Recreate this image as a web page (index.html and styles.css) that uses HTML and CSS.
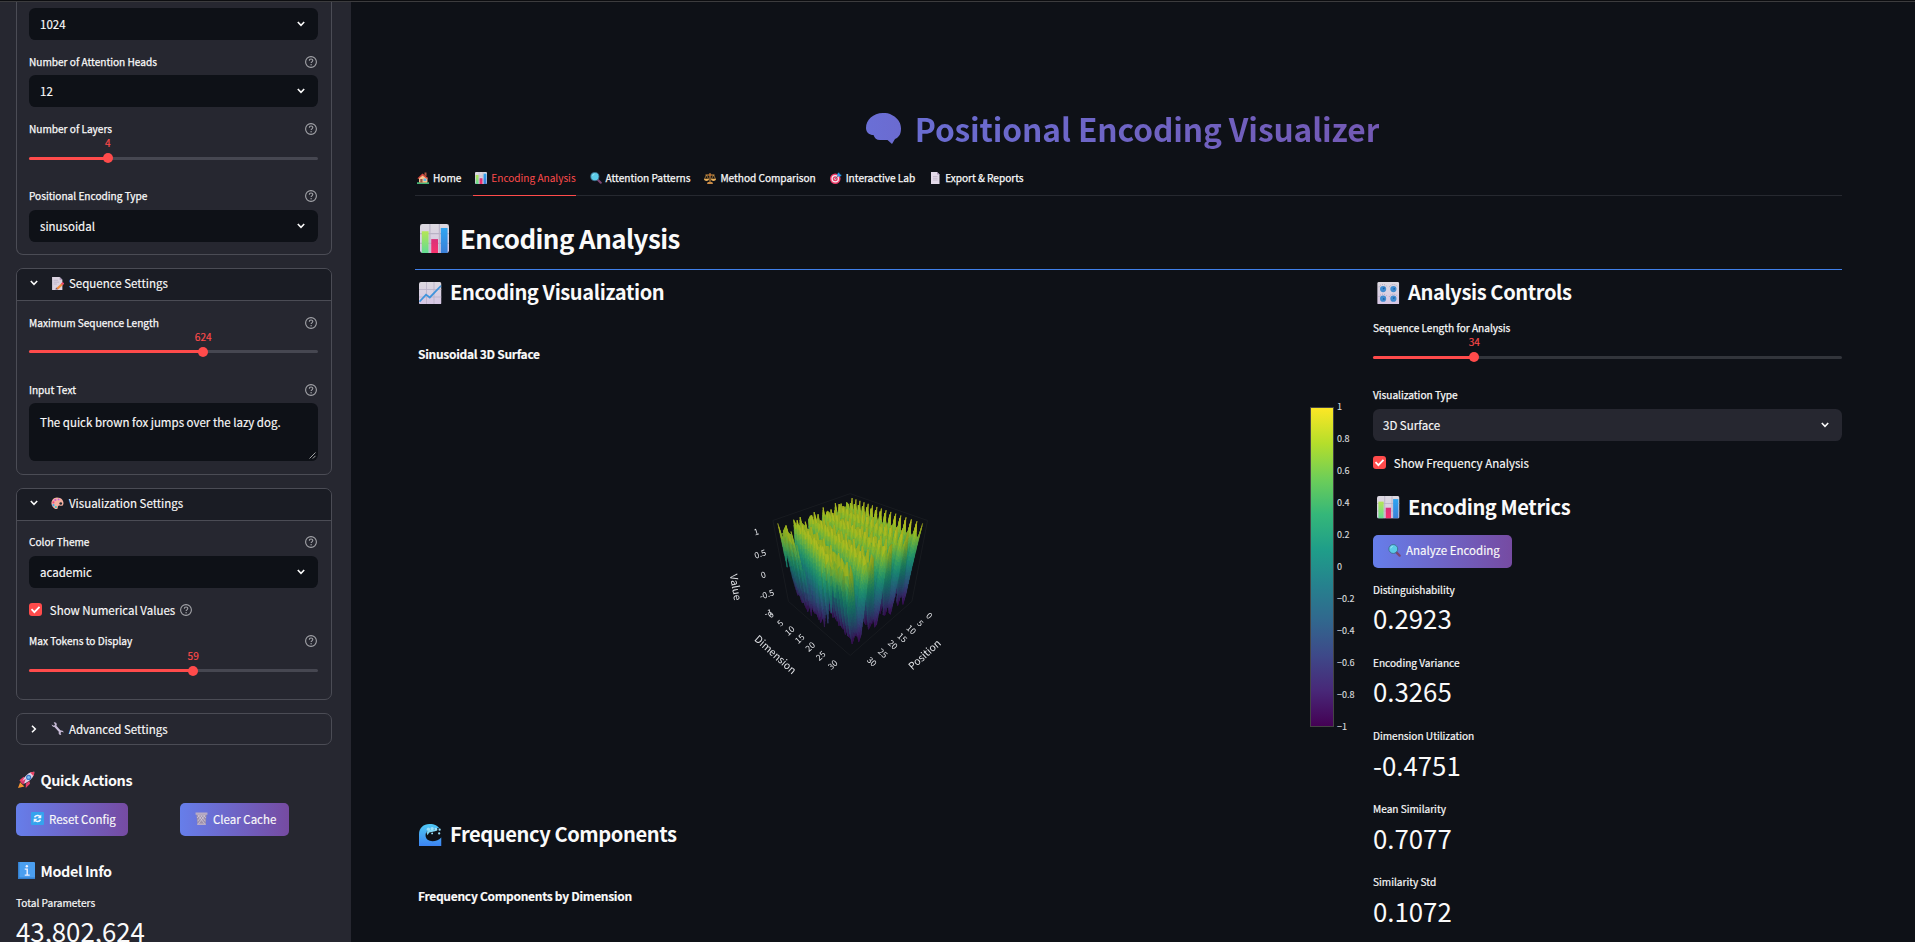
FILE: index.html
```html
<!DOCTYPE html>
<html lang="en">
<head>
<meta charset="utf-8">
<title>Positional Encoding Visualizer</title>
<link rel="stylesheet" href="styles.css">
</head>
<body>
<svg class="defs" aria-hidden="true">
  <defs>
    <linearGradient id="paper" x1="0" y1="0" x2="0" y2="1"><stop offset="0" stop-color="#dcd9e0"/><stop offset="1" stop-color="#d6c6e4"/></linearGradient>
    <linearGradient id="green" x1="0" y1="0" x2="0" y2="1"><stop offset="0" stop-color="#b5e655"/><stop offset="1" stop-color="#62dc94"/></linearGradient>
    <linearGradient id="pink" x1="0" y1="0" x2="0" y2="1"><stop offset="0" stop-color="#d9307a"/><stop offset="1" stop-color="#f8326c"/></linearGradient>
    <linearGradient id="blue" x1="0" y1="0" x2="0" y2="1"><stop offset="0" stop-color="#2ea5f2"/><stop offset="1" stop-color="#3b7fd6"/></linearGradient>
    <linearGradient id="sea" x1="0" y1="0" x2="0" y2="1"><stop offset="0" stop-color="#4fc9f5"/><stop offset="1" stop-color="#3c82f2"/></linearGradient>
    <linearGradient id="violet" x1="0" y1="0" x2="1" y2="0"><stop offset="0" stop-color="#6a6fd6"/><stop offset="1" stop-color="#6b6bd0"/></linearGradient>
  </defs>
  <symbol id="bars" viewBox="0 0 24 24"><rect width="24" height="24" rx="2" fill="url(#paper)"/><path d="M8.2 0v24M16 0v24M0 8h24M0 16h24" stroke="#b9b2c6" stroke-width=".9"/><rect x="1.5" y="6" width="5.6" height="18" fill="url(#green)"/><rect x="9.3" y="12.5" width="5.6" height="11.5" fill="url(#pink)"/><rect x="17.2" y="3.3" width="5.6" height="20.7" fill="url(#blue)"/></symbol>
  <symbol id="trend" viewBox="0 0 24 24"><rect width="24" height="24" rx="2" fill="url(#paper)"/><path d="M8 0v24M16 0v24M0 8h24M0 16h24" stroke="#bab3c8" stroke-width=".9"/><path d="M.5 21 7.5 13.5 11.5 16.5 23.5 4" fill="none" stroke="#3f94dc" stroke-width="1.9"/></symbol>
  <symbol id="knobs" viewBox="0 0 24 24"><rect x=".4" width="23.2" height="24" rx="1.5" fill="url(#paper)"/><g stroke="#a79bb2" stroke-width="1" stroke-dasharray="1 1.2" fill="none"><path d="M2 5.500a5 5 0 0 1 9 0M13 5.500a5 5 0 0 1 9 0M2 15.800a5 5 0 0 1 9 0M13 15.800a5 5 0 0 1 9 0"/></g><g fill="#3f8bd0"><circle cx="6.500" cy="7.500" r="3.300"/><circle cx="17.500" cy="7.500" r="3.300"/><circle cx="6.500" cy="17.800" r="3.300"/><circle cx="17.500" cy="17.800" r="3.300"/></g><path d="M6.500 7.500 8 6M17.500 7.500l1.600-.5M6.500 17.800l1.500.8M17.500 17.800l1-1.400" stroke="#1a5a97" stroke-width="1.400"/></symbol>
  <symbol id="search" viewBox="0 0 24 24"><path d="m14.500 14.500 7 7" stroke="#7c4672" stroke-width="4.200" stroke-linecap="round"/><circle cx="9.700" cy="9.200" r="8.200" fill="#5ccbe8" stroke="#3c6d8b" stroke-width="1.600"/><path d="M5 8a5 5 0 0 1 4-4" stroke="#a5ebf7" stroke-width="1.500" fill="none"/></symbol>
  <symbol id="house" viewBox="0 0 24 24"><path d="M4 11h17v10H4z" fill="#f0b98a"/><path d="M0 20.500h24V24H0z" fill="#45b576"/><path d="M5 12 12 5l8 7v9H5z" fill="#f9c58d"/><path d="M1 12.500 11 3l11 9.500-2 1.500-9-7-8.500 7z" fill="#d9483f"/><path d="M15 1h4v8l-4-3z" fill="#b1543e"/><rect x="6.500" y="14" width="4.500" height="7" fill="#985446"/><rect x="13" y="13" width="5.500" height="5" fill="#5bb7ee"/></symbol>
  <symbol id="scales" viewBox="0 0 24 24"><g stroke="#d89a45" fill="none" stroke-width="2"><path d="M12 2v19M3 6h18M7 22h10"/><path d="M5 6 1 14h8L5 6M19 6l-4 8h8l-4-8" stroke-width="1.300"/></g><path d="M0 14h10c0 5-10 5-10 0m14 0h10c0 5-10 5-10 0" fill="#edb35b"/><circle cx="12" cy="6" r="2.500" fill="#b56a32"/><path d="M8 20h8l2 4H6z" fill="#c98a45"/></symbol>
  <symbol id="target" viewBox="0 0 24 24"><circle cx="10.500" cy="13.500" r="10.500" fill="#ed3b67"/><circle cx="10.500" cy="13.500" r="7.600" fill="#f2e8f2"/><circle cx="10.500" cy="13.500" r="5" fill="#e33b63"/><circle cx="10.500" cy="13.500" r="2" fill="#f2e8f2"/><path d="m10 14 7-7" stroke="#596478" stroke-width="1.600"/><path d="m15 8-.5-4L18 .500l1.500 3.800L23.500 6 20 9.500z" fill="#289cec"/></symbol>
  <symbol id="page" viewBox="0 0 24 24"><path d="M4 0h12l5 5v19H4z" fill="#e2d9e8"/><path d="m16 0 5 5h-5z" fill="#a996b7"/><path d="M8 9h9M8 12.500h9M8 16h9" stroke="#b7aabf" stroke-width="1.300"/></symbol>
  <symbol id="memo" viewBox="0 0 24 24"><path d="M2 0h14l5 5v19H2z" fill="#dcd3e1"/><path d="m16 0 5 5h-5z" fill="#a996b7"/><path d="M5 6h8M5 9.500h10M5 13h6" stroke="#b5a9bf" stroke-width="1.200"/><path d="m9 21 11-10 3 3-10 9z" fill="#f28b3d"/><path d="m18.500 12 3-3 3 3-3 3z" fill="#e8476f"/><path d="m8 23 1.500-3.500L13 23z" fill="#7b5367"/></symbol>
  <symbol id="palette" viewBox="0 0 24 24"><path d="M11 1C2 1-2 12 3 18c3 4 6 5 8 4 3-1 0-4 3-6 3-1 5 2 8-1 3-4 0-14-11-14" fill="#f5b1a1"/><circle cx="18" cy="12" r="2.500" fill="#202630"/><g><circle cx="8" cy="5.500" r="2" fill="#d558d7"/><circle cx="14" cy="4.500" r="1.600" fill="#c95ad8"/><circle cx="4.500" cy="10" r="2" fill="#ed497b"/><circle cx="4.500" cy="15" r="2" fill="#3fa9ef"/><circle cx="9" cy="18.500" r="2" fill="#3ec6be"/></g></symbol>
  <symbol id="wrench" viewBox="0 0 24 24"><path d="m7 7 11 12" stroke="#cdc1dc" stroke-width="4"/><path d="M1 4.500 5.500 7 7.500 5 5 .800c4-1 7 2.500 5 6-1.500 3.500-7 4-9-2.300M23.500 19.500 19.500 18l-2 2 1.500 3.800c-3.500.500-6-2.500-4.500-5.500 2-3.500 8-3.300 9 1.200" fill="#c3b7d2"/></symbol>
  <symbol id="rocket" viewBox="0 0 24 24"><path d="m0 24 3-8 6 6z" fill="#f79430"/><path d="m2 13 6-5 4 4-6 6zM11 18l5-4 1 4-6 6z" fill="#ee416c"/><path d="M6 16c2-8 9-15 17-15 0 8-7 14-15 17z" fill="#ded3e7"/><path d="M17 2c2-.800 4-1 6-1 0 2-.300 4-1.200 6z" fill="#e94264"/><circle cx="15" cy="9" r="3.600" fill="#3f77c8"/><circle cx="15" cy="9" r="2" fill="#75c1f1"/><path d="m4 16 7-5-3 8z" fill="#d93568"/></symbol>
  <symbol id="refresh" viewBox="0 0 24 24"><rect width="24" height="24" rx="2" fill="#35a3ed"/><g fill="none" stroke="#f4f5ff" stroke-width="2.800"><path d="M6.500 10c2-4.500 8-4.500 10-1.500M17.500 14c-2 4.500-8 4.500-10 1.500"/></g><path d="M19 4.500v7h-7zM5 19.500v-7h7z" fill="#f4f5ff"/></symbol>
  <symbol id="trash" viewBox="0 0 24 24"><path d="M2.500 3h19l-2 20h-15z" fill="#9c90aa"/><path d="m5 5 13 17M10 5l9 12M15 5l5 6M19 5 6 22M14 5 5 17M9 5l-5 6" stroke="#d8cedf" stroke-width="1.300"/><path d="M1 1h22v4H1zM4 21h16v3H4z" fill="#b9acc4"/></symbol>
  <symbol id="info" viewBox="0 0 24 24"><rect width="24" height="24" rx="1.500" fill="#4b9ff0"/><path d="M0 0h2v24H0zM0 22h24v2H0z" fill="#347fce"/><path d="M9.500 10h3.500v8M9.500 18.500h7" fill="none" stroke="#eff1ff" stroke-width="2"/><circle cx="12.500" cy="6" r="1.700" fill="#eff1ff"/></symbol>
  <symbol id="wave" viewBox="0 0 24 24"><path d="M0 24V11C0 4 5 0 11 0c6 0 9 2 11 5-3-1-5 0-6 1-4-1-9 1-9 6 0 8 12 8 17 2v10z" fill="url(#sea)"/><path d="M8 9c3-5 7-3 9-3l3 1-4 1-5 1-2 3z" fill="#7fd6f5"/><g fill="#9be0f8"><circle cx="10" cy="5.500" r="1.800"/><circle cx="14" cy="5" r="1.800"/><circle cx="18" cy="5.500" r="1.500"/><circle cx="22" cy="6" r="1.200"/><circle cx="21.500" cy="10" r="1.200"/><circle cx="14" cy="10" r="1"/></g></symbol>
  <symbol id="brain" viewBox="0 0 35 31"><path d="M17 0c4-.300 8 1 11.500 3.500 4 3 6.500 7 6.500 12 0 5-1.500 8.500-6 10.500L26 31l-4.500-4H14c-3.500 0-5.500-2-6.500-5C3.500 22 0 19.500 0 15 0 7 7 0 17 0" fill="url(#violet)"/></symbol>
  <symbol id="down" viewBox="0 0 8 6"><path d="M.8 1 4 4.300 7.200 1" fill="none" stroke="#fafafa" stroke-width="1.600"/></symbol>
  <symbol id="right" viewBox="0 0 6 8"><path d="M1 .8 4.300 4 1 7.200" fill="none" stroke="#fafafa" stroke-width="1.600"/></symbol>
  <symbol id="help" viewBox="0 0 12 12"><circle cx="6" cy="6" r="5.400" fill="none" stroke="#a3a4a9" stroke-width="1.100"/><path d="M4.300 4.800c0-2.400 3.500-2.300 3.500-.2 0 1.200-1.700 1.300-1.700 2.500" fill="none" stroke="#a3a4a9" stroke-width="1.100"/><circle cx="6.100" cy="8.800" r=".7" fill="#a3a4a9"/></symbol>
  <symbol id="check" viewBox="0 0 13 13"><rect width="13" height="13" rx="3" fill="#ff4b4b"/><path d="m2.500 6.200 2.900 2.900 5.100-5.200" fill="none" stroke="#fff" stroke-width="1.800"/></symbol>
</svg>

<div class="topline"></div>
<div class="app">
  <aside class="sidebar">
    <section class="expander cut">
      <div class="body">
        <div class="select"><span>1024</span><svg class="chev"><use href="#down"/></svg></div>
        <div><div class="label"><span>Number of Attention Heads</span><svg class="help"><use href="#help"/></svg></div>
          <div class="select"><span>12</span><svg class="chev"><use href="#down"/></svg></div></div>
        <div><div class="label"><span>Number of Layers</span><svg class="help"><use href="#help"/></svg></div>
          <div class="slider"><div class="fill" style="width:27.300%"><b>4</b></div></div></div>
        <div><div class="label"><span>Positional Encoding Type</span><svg class="help"><use href="#help"/></svg></div>
          <div class="select"><span>sinusoidal</span><svg class="chev"><use href="#down"/></svg></div></div>
      </div>
    </section>
    <section class="expander">
      <div class="head"><svg class="chev"><use href="#down"/></svg><svg class="emo"><use href="#memo"/></svg><span>Sequence Settings</span></div>
      <div class="body">
        <div><div class="label"><span>Maximum Sequence Length</span><svg class="help"><use href="#help"/></svg></div>
          <div class="slider"><div class="fill" style="width:60.300%"><b>624</b></div></div></div>
        <div><div class="label"><span>Input Text</span><svg class="help"><use href="#help"/></svg></div>
          <div class="textarea"><span>The quick brown fox jumps over the lazy dog.</span><svg class="grip" viewBox="0 0 7 7"><path d="M.5 6.500l6-6M3.800 6.500l2.700-2.700" stroke="#c5c6c8" stroke-width=".8"/></svg></div></div>
      </div>
    </section>
    <section class="expander">
      <div class="head"><svg class="chev"><use href="#down"/></svg><svg class="emo"><use href="#palette"/></svg><span>Visualization Settings</span></div>
      <div class="body">
        <div><div class="label"><span>Color Theme</span><svg class="help"><use href="#help"/></svg></div>
          <div class="select"><span>academic</span><svg class="chev"><use href="#down"/></svg></div></div>
        <div class="checkrow"><svg class="check"><use href="#check"/></svg><span>Show Numerical Values</span><svg class="help"><use href="#help"/></svg></div>
        <div><div class="label"><span>Max Tokens to Display</span><svg class="help"><use href="#help"/></svg></div>
          <div class="slider"><div class="fill" style="width:56.800%"><b>59</b></div></div></div>
      </div>
    </section>
    <section class="expander closed">
      <div class="head"><svg class="chev side"><use href="#right"/></svg><svg class="emo"><use href="#wrench"/></svg><span>Advanced Settings</span></div>
    </section>
    <h4 class="side-title"><svg><use href="#rocket"/></svg>Quick Actions</h4>
    <div class="actions">
      <div class="button reset"><svg class="emo"><use href="#refresh"/></svg><span>Reset Config</span></div>
      <div class="button clear"><svg class="emo"><use href="#trash"/></svg><span>Clear Cache</span></div>
    </div>
    <h4 class="side-title info"><svg><use href="#info"/></svg>Model Info</h4>
    <div class="metric total"><div class="name">Total Parameters</div><div class="num">43,802,624</div></div>
  </aside>

  <main class="main">
    <h1 class="title"><svg><use href="#brain"/></svg><span>Positional Encoding Visualizer</span></h1>
    <nav class="tabs">
      <div class="tab"><svg><use href="#house"/></svg><span>Home</span></div>
      <div class="tab active"><svg><use href="#bars"/></svg><span>Encoding Analysis</span></div>
      <div class="tab"><svg><use href="#search"/></svg><span>Attention Patterns</span></div>
      <div class="tab"><svg><use href="#scales"/></svg><span>Method Comparison</span></div>
      <div class="tab"><svg><use href="#target"/></svg><span>Interactive Lab</span></div>
      <div class="tab"><svg><use href="#page"/></svg><span>Export &amp; Reports</span></div>
    </nav>
    <h2 class="section"><svg><use href="#bars"/></svg><span>Encoding Analysis</span></h2>
    <div class="columns">
      <div class="left">
        <h3 class="sub"><svg><use href="#trend"/></svg><span>Encoding Visualization</span></h3>
        <div class="plot">
          <div class="plot-title">Sinusoidal 3D Surface</div>
          <canvas id="surface" class="surface" width="280" height="230"></canvas>
          <svg class="axes" viewBox="0 0 280 230">
            <g class="tick" id="ticks"></g>
            <g class="axis">
              <text transform="translate(76,184) rotate(42)">Dimension</text>
              <text transform="translate(224,184) rotate(-42)">Position</text>
              <text transform="translate(36.500,117) rotate(80)">Value</text>
            </g>
          </svg>
          <div class="colorbar"><div class="ramp"></div>
            <div class="scale"><i>1</i><i>0.8</i><i>0.6</i><i>0.4</i><i>0.2</i><i>0</i><i>−0.2</i><i>−0.4</i><i>−0.6</i><i>−0.8</i><i>−1</i></div></div>
        </div>
        <h3 class="sub"><svg><use href="#wave"/></svg><span>Frequency Components</span></h3>
        <div class="plot-title second">Frequency Components by Dimension</div>
      </div>
      <div class="right">
        <h3 class="sub"><svg><use href="#knobs"/></svg><span>Analysis Controls</span></h3>
        <div class="controls">
          <div><div class="label"><span>Sequence Length for Analysis</span></div>
            <div class="slider"><div class="fill" style="width:21.600%"><b>34</b></div></div></div>
          <div><div class="label"><span>Visualization Type</span></div>
            <div class="select light"><span>3D Surface</span><svg class="chev"><use href="#down"/></svg></div></div>
          <div class="checkrow"><svg class="check"><use href="#check"/></svg><span>Show Frequency Analysis</span></div>
        </div>
        <h3 class="sub met"><svg><use href="#bars"/></svg><span>Encoding Metrics</span></h3>
        <div class="button analyze"><svg class="emo"><use href="#search"/></svg><span>Analyze Encoding</span></div>
        <div class="metric"><div class="name">Distinguishability</div><div class="num">0.2923</div></div>
        <div class="metric"><div class="name">Encoding Variance</div><div class="num">0.3265</div></div>
        <div class="metric"><div class="name">Dimension Utilization</div><div class="num">-0.4751</div></div>
        <div class="metric"><div class="name">Mean Similarity</div><div class="num">0.7077</div></div>
        <div class="metric"><div class="name">Similarity Std</div><div class="num">0.1072</div></div>
      </div>
    </div>
  </main>
</div>
<script src="surface.js"></script>
</body>
</html>
```
FILE: styles.css
```css
* { box-sizing: border-box; }
body { margin: 0; height: 942px; overflow: hidden; background: #0e1117; color: #fafafa; font-family: "Noto Sans CJK SC", "Noto Sans", sans-serif; font-size: 11.5px; -webkit-text-stroke: .15px; }
h1, h2, h3, h4 { margin: 0; font-weight: 600; -webkit-text-stroke: 0; }
svg { display: block; flex: none; }
.defs { position: absolute; width: 0; height: 0; }
.topline { height: 2px; background: #0c0d10; border-bottom: 1px solid #3c3c3e; }
.app { display: flex; height: 940px; overflow: hidden; }

.sidebar { width: 351px; flex: none; background: #262730; padding-left: 16px; }
.expander { width: 316px; border: 1px solid #4b4c55; border-radius: 7px; margin-bottom: 12.800px; overflow: hidden; }
.expander.cut { border-top: 0; border-radius: 0 0 7px 7px; height: 253.200px; }
.expander.cut .body { padding-top: 6px; }
.head { height: 32px; display: flex; align-items: center; background: #1a1c24; border-bottom: 1px solid #4b4c55; padding: 0 0 2px 13px; line-height: 18px; }
.closed .head { height: 30px; background: none; border: 0; padding-bottom: 1px; }
.head .chev { margin: 0 13px 0 0; }
.emo { width: 13px; height: 13px; margin-right: 5px; }
.body { padding: 12.600px 13px 12.600px 12px; display: flex; flex-direction: column; gap: 12.800px; }
.label { height: 22.400px; display: flex; justify-content: space-between; font-size: 10.100px; line-height: 17px; -webkit-text-stroke: .25px; }
.help { width: 12px; height: 12px; margin: 3px 1px 0 0; }
.select { height: 32px; display: flex; align-items: center; justify-content: space-between; background: #0e1117; border-radius: 6.400px; padding: 0 13px 0 11px; }
.select.light { background: #262730; padding-left: 10px; }
.chev { width: 8px; height: 6px; }
.chev.side { width: 6px; height: 8px; margin: 0 14px 0 1px; }
.slider { height: 32px; padding-top: 14.500px; position: relative; }
.slider::before { content: ""; display: block; height: 3px; border-radius: 2px; background: #464751; }
.controls .slider::before { background: #32353b; }
.fill { height: 3px; margin-top: -3px; border-radius: 2px; background: #ff4b4b; position: relative; }
.fill::after { content: ""; position: absolute; width: 10px; height: 10px; right: -5px; top: -3.500px; border-radius: 50%; background: #ff4b4b; }
.fill b { position: absolute; right: -20px; width: 40px; top: -21.500px; text-align: center; font-weight: 400; font-size: 10.100px; line-height: 16px; color: #ff4b4b; }
.textarea { height: 58px; background: #0e1117; border-radius: 6.400px; padding: 10px 11px; line-height: 18px; position: relative; }
.grip { position: absolute; right: 2px; bottom: 2px; width: 7px; height: 7px; }
.checkrow { height: 19.200px; display: flex; align-items: center; line-height: 18px; }
.check { width: 13px; height: 13px; margin-right: 7.800px; }
.checkrow .help { margin: 0 0 0 5px; }
.side-title { display: flex; align-items: center; gap: 6px; height: 22px; font-size: 14.400px; letter-spacing: -.38px; margin: 23.600px 0 0 1.500px; }
.side-title svg { width: 17px; height: 17px; }
.side-title.info { margin-top: 23px; }
.actions { display: flex; gap: 52px; margin-top: 12.600px; }
.button { height: 33px; border-radius: 5px; background: linear-gradient(90deg, #667eea, #764ba2); display: flex; align-items: center; padding: 0 0 2px 15px; line-height: 18px; white-space: nowrap; }
.reset { width: 112px; }
.clear { width: 109px; }
.metric { height: 73.200px; }
.name { height: 18px; line-height: 16px; font-size: 10.100px; -webkit-text-stroke: .2px; }
.num { font-size: 25.800px; line-height: 36px; -webkit-text-stroke: 0; }
.total { margin-top: 14px; }

.main { width: 1491px; padding-left: 64px; }
.title { height: 54px; margin-top: 99px; display: flex; align-items: center; justify-content: center; gap: 14px; padding-right: 12px; font-size: 31.700px; line-height: 50px; letter-spacing: -.1px; }
.title svg { width: 35px; height: 31px; }
.title span { background: linear-gradient(90deg, #6a6dd2, #7359b4); background-clip: text; -webkit-background-clip: text; color: transparent; }
.tabs { display: flex; gap: 12px; height: 41px; border-bottom: 1px solid #262930; padding-top: 10px; }
.tab { display: flex; gap: 4px; height: 31px; padding: 5px 0 0 2px; font-size: 10.100px; line-height: 16px; letter-spacing: -.02px; white-space: nowrap; -webkit-text-stroke: .25px; }
.tab svg { width: 12px; height: 12px; margin-top: 2px; }
.tab.active { color: #ff4b4b; border-bottom: 1px solid #ff4b4b; -webkit-text-stroke: 0; }
.section { display: flex; align-items: center; height: 74px; border-bottom: 1px solid #3f7fe8; font-size: 25.900px; line-height: 40px; letter-spacing: -.55px; gap: 11px; padding: 12px 0 0 5px; }
.section svg { width: 29px; height: 29px; }
.section span { margin-top: -1px; }
.columns { display: flex; justify-content: space-between; }
.left { width: 942px; }
.right { width: 469px; }
.sub { display: flex; align-items: center; gap: 8.500px; height: 46px; padding-left: 4px; font-size: 20.100px; line-height: 32px; letter-spacing: -.41px; }
.sub svg { width: 22.500px; height: 22.500px; }
.sub span { margin-top: -2px; }
.plot { height: 496px; position: relative; padding-top: 28px; }
.plot-title { font-size: 12px; line-height: 20px; letter-spacing: -.29px; padding-left: 3px; font-weight: 700; }
.second { margin-top: 28px; }
.surface, .axes { position: absolute; left: 285px; top: 154px; width: 280px; height: 230px; }
.axes text { fill: #e2e4e8; text-anchor: middle; dominant-baseline: central; stroke: none; }
.tick text { font-size: 8.500px; }
.axis text { font-size: 10.300px; }
.colorbar { position: absolute; left: 895px; top: 91px; display: flex; }
.ramp { width: 24px; height: 320px; border: 1px solid #444; background: linear-gradient(#fde725, #b5de2b, #6ece58, #35b779, #1f9e89, #26828e, #31688e, #3e4989, #482878, #440154); }
.scale { margin: -8px 0 0 3px; }
.scale i { display: block; height: 32px; line-height: 16px; font-style: normal; font-size: 9px; color: #d7d9dc; }
.controls { display: flex; flex-direction: column; gap: 12.800px; padding-top: 3px; }
.met { margin-top: 8px; height: 54px; }
.met span { margin-top: -1px; }
.analyze { width: 139px; margin: 0 0 14px; }
.right .num { padding-top: .6px; }
```
FILE: surface.js
```javascript
const ctx = document.getElementById('surface').getContext('2d');
const NPOS = 34, NDIM = 32, SUB = 6;
const stops = [[68,1,84],[72,40,120],[62,73,137],[49,104,142],[38,130,142],[31,158,137],[53,183,121],[110,206,88],[181,222,43],[253,231,37]];

const encode = (p, d) => {
  const a = p * Math.pow(10000, -2 * Math.floor(d / 2) / 1024);
  return d % 2 ? Math.cos(a) : Math.sin(a);
};
const color = (v, k) => {
  const t = Math.max(0, Math.min(1, (v + 1) / 2)) * 9, i = Math.min(8, Math.floor(t)), f = t - i;
  return 'rgb(' + stops[i].map((c, n) => Math.round((c + (stops[i + 1][n] - c) * f) * k)).join(',') + ')';
};
const project = (x, y, z) => {
  const depth = 2.73 - (x + y + z) / Math.sqrt(3);
  return [150.2 + (y - x) / Math.SQRT2 / depth * 250, 95.5 - (2 * z - x - y) / Math.sqrt(6) / depth * 252];
};

ctx.strokeStyle = '#181b20';
ctx.lineWidth = 1;
const corners = [[.5,-.5,.5],[-.5,-.5,.5],[-.5,.5,.5],[-.5,.5,-.5],[.5,.5,-.5],[.5,-.5,-.5],[.5,-.5,.5]];
ctx.beginPath();
corners.forEach(c => ctx.lineTo(...project(...c.map(v => v * 1.06))));
ctx.stroke();

const cells = [];
for (let p = 0; p < NPOS - 1; p++) for (let d = 0; d < NDIM - 1; d++) cells.push([p, d]);
cells.sort((a, b) => a[0] / NPOS + a[1] / NDIM - b[0] / NPOS - b[1] / NDIM);
for (const [p, d] of cells) {
  const q = [encode(p, d), encode(p + 1, d), encode(p, d + 1), encode(p + 1, d + 1)];
  const at = (u, v) => q[0] * (1 - u) * (1 - v) + q[1] * u * (1 - v) + q[2] * (1 - u) * v + q[3] * u * v;
  const pt = (u, v) => project((p + u) / (NPOS - 1) - .5, (d + v) / (NDIM - 1) - .5, at(u, v) / 2);
  const sx = (q[1] + q[3] - q[0] - q[2]) / 2, sy = (q[2] + q[3] - q[0] - q[1]) / 2;
  const shade = .77 + .06 * Math.tanh(-sx) - .05 * Math.tanh(sy);
  for (let i = 0; i < SUB; i++) for (let j = 0; j < SUB; j++) {
    const u = i / SUB, v = j / SUB, e = 1 / SUB;
    const value = at(u + e / 2, v + e / 2);
    ctx.fillStyle = ctx.strokeStyle = color(value, shade + (value > .92 ? .1 : 0));
    ctx.lineWidth = .5;
    ctx.beginPath();
    [[u, v], [u + e, v], [u + e, v + e], [u, v + e]].forEach(c => ctx.lineTo(...pt(...c)));
    ctx.closePath();
    ctx.fill();
    ctx.stroke();
  }
}

const ticks = [
  ['1',56,61,-18],['0.5',60,83,-18],['0',63,104,-18],['-0.5',66.500,123.500,-18],['-1',68,142,-18],
  ['0',70,144,-42],['5',79.500,152.500,-42],['10',89,160,-42],['15',99,168,-42],['20',109.500,176,-42],['25',120,185,-42],['30',132,194,-42],
  ['0',230,145,42],['5',221,152.500,42],['10',212,159,42],['15',203,167,42],['20',193.500,174,42],['25',183.500,182.500,42],['30',172.500,191,42]
];
document.getElementById('ticks').innerHTML = ticks.map(t => `<text transform="translate(${t[1]},${t[2]}) rotate(${t[3]})">${t[0]}</text>`).join('');
```
